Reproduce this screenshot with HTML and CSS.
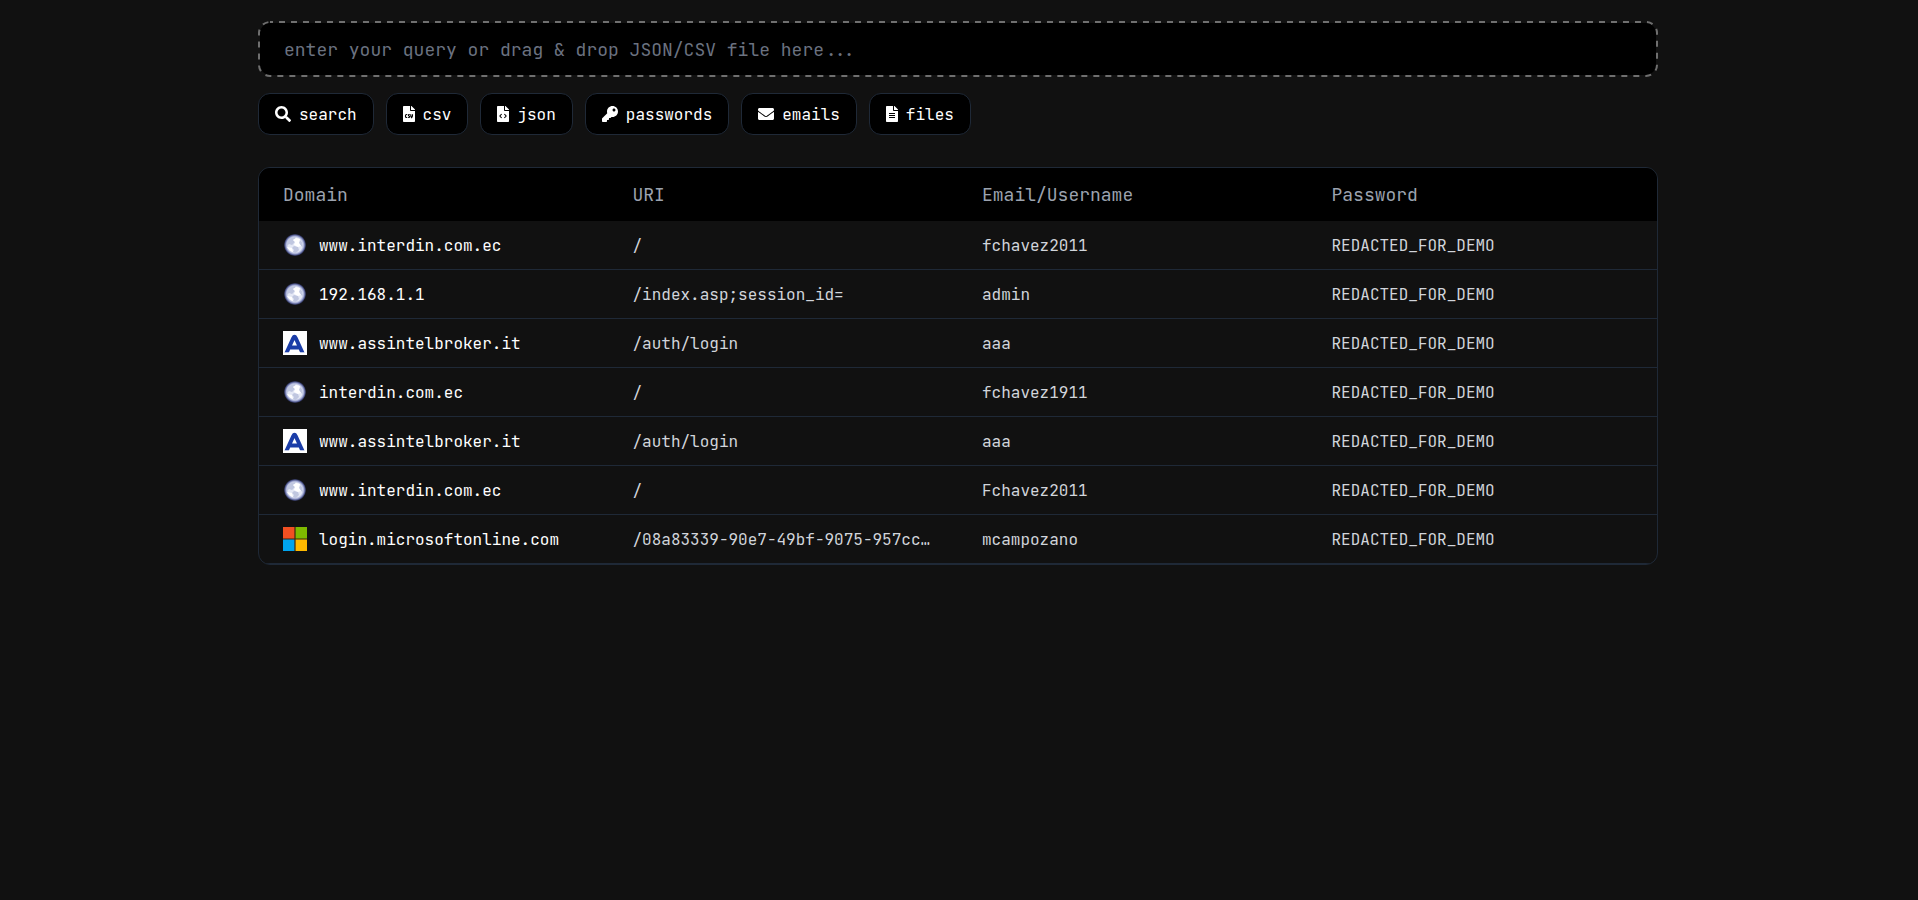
FILE: index.html
```html
<!DOCTYPE html>
<html lang="en">
<head>
<meta charset="utf-8">
<title>Search</title>
<link rel="stylesheet" href="styles.css">
</head>
<body>
<svg class="sprite" aria-hidden="true">
  <defs>
    <radialGradient id="rim">
      <stop offset="0.66" stop-color="#e4e8f5"/>
      <stop offset="0.8" stop-color="#a3abd4"/>
      <stop offset="0.92" stop-color="#4c5488"/>
      <stop offset="1" stop-color="#1d2036"/>
    </radialGradient>
    <symbol id="globe" viewBox="0 0 24 24">
      <circle cx="12" cy="12" r="11" fill="url(#rim)"/>
      <path d="M6 6Q9 4 12 4L13 5L10 7L12 9L9 12L6 11L4 13Q3 9 6 6Z" fill="#c0c7e0"/>
      <path d="M11 13L15 14L16 17L13 20Q11 20 10 19L11 17L9 15Z" fill="#c0c7e0"/>
      <path d="M17 7L19 9L20 14L18 13L16 10Z" fill="#c0c7e0"/>
      <path d="M13 5L17 6L16 10L18 13L15 14L11 12L12 9L10 7Z" fill="#fff"/>
      <path d="M4 14L9 15L10 19Q6 18 4 14Z" fill="#fff"/>
    </symbol>
    <symbol id="letter" viewBox="0 0 24 24">
      <path d="M0 0H24V24H0Z" fill="#fff"/>
      <path d="M3 23L10.300 7Q11.500 4.500 12.700 7L20 23M6 16.500H17" fill="none" stroke="#1b3da8" stroke-width="4" stroke-linejoin="round"/>
      <path d="M0 21.300H24V24H0Z" fill="#fff"/>
    </symbol>
    <symbol id="tiles" viewBox="0 0 24 24">
      <path d="M0 0H24V24H0Z" fill="#3b2510"/>
      <path d="M0 0H11.400V11.400H0Z" fill="#f25022"/>
      <path d="M12.600 0H24V11.400H12.600Z" fill="#7fba00"/>
      <path d="M0 12.600H11.400V24H0Z" fill="#00a4ef"/>
      <path d="M12.600 12.600H24V24H12.600Z" fill="#ffb900"/>
    </symbol>
    <symbol id="sheet" viewBox="0 0 384 512">
      <path d="M224 136V0H24C10.700 0 0 10.700 0 24v464c0 13.300 10.700 24 24 24h336c13.300 0 24-10.700 24-24V160H248c-13.200 0-24-10.800-24-24zm160-14.100v6.100H256V0h6.100c6.400 0 12.500 2.500 17 7l97.900 98c4.500 4.500 7 10.600 7 16.900z" fill="#fff"/>
    </symbol>
  </defs>
</svg>

<main class="page">
  <form class="controls">
    <div class="dropzone">
      <input class="query" type="text" aria-label="Query" placeholder="enter your query or drag &amp; drop JSON/CSV file here...">
      <svg class="dashes" aria-hidden="true"><rect class="dash-line" x="1" y="1" rx="11"/></svg>
    </div>
    <div class="actions">
      <button class="btn" type="button">
        <svg class="icon" viewBox="0 0 512 512" aria-hidden="true"><path d="M505 442.700L405.300 343c-4.500-4.500-10.600-7-17-7H372c27.600-35.300 44-79.700 44-128C416 93.100 322.900 0 208 0S0 93.100 0 208s93.100 208 208 208c48.300 0 92.700-16.400 128-44v16.300c0 6.400 2.500 12.500 7 17l99.700 99.700c9.400 9.400 24.600 9.400 33.900 0l28.300-28.300c9.400-9.400 9.400-24.600.1-34zM208 336c-70.700 0-128-57.200-128-128 0-70.700 57.200-128 128-128 70.700 0 128 57.200 128 128 0 70.700-57.200 128-128 128z"/></svg>
        search
      </button>
      <button class="btn" type="button">
        <svg class="icon icon-file" viewBox="0 0 384 512" aria-hidden="true"><use href="#sheet"/><path class="cut heavy" d="M136 272H112Q80 272 80 304V336Q80 368 112 368H136M216 272H196Q172 272 172 296Q172 312 192 320Q212 328 212 344Q212 368 188 368H164M248 264V296Q248 336 276 372Q304 336 304 296V264"/></svg>
        csv
      </button>
      <button class="btn" type="button">
        <svg class="icon icon-file" viewBox="0 0 384 512" aria-hidden="true"><use href="#sheet"/><path class="cut heavy" d="M148 256L92 320L148 384M236 256L292 320L236 384"/></svg>
        json
      </button>
      <button class="btn" type="button">
        <svg class="icon" viewBox="0 0 512 512" aria-hidden="true"><path d="M512 176C512 273.200 433.200 352 336 352c-11.200 0-22.200-1.100-32.800-3.100l-24 27A24 24 0 0 1 261.200 384H224v40c0 13.300-10.700 24-24 24h-40v40c0 13.300-10.700 24-24 24H24c-13.300 0-24-10.700-24-24v-78.100c0-6.400 2.500-12.500 7-17l161.800-161.800C163.100 213.800 160 195.300 160 176 160 78.800 238.800 0 336 0 433.500 0 512 78.500 512 176zM336 128c0 26.500 21.500 48 48 48s48-21.500 48-48-21.500-48-48-48-48 21.500-48 48z"/></svg>
        passwords
      </button>
      <button class="btn" type="button">
        <svg class="icon" viewBox="0 0 512 512" aria-hidden="true"><path d="M502.300 190.800c3.900-3.100 9.700-.2 9.700 4.700V400c0 26.500-21.500 48-48 48H48c-26.500 0-48-21.500-48-48V195.600c0-5 5.700-7.800 9.700-4.700 22.400 17.400 52.100 39.500 154.100 113.600 21.100 15.400 56.700 47.800 92.200 47.600 35.700.3 72-32.800 92.300-47.600 102-74.100 131.600-96.300 154-113.700zM256 320c23.200.4 56.600-29.200 73.400-41.400 132.700-96.300 142.800-104.700 173.400-128.700 5.800-4.500 9.200-11.500 9.200-18.900v-19c0-26.500-21.500-48-48-48H48c-26.500 0-48 21.500-48 48v19c0 7.400 3.400 14.300 9.200 18.900 30.600 23.900 40.700 32.400 173.400 128.700 16.800 12.200 50.200 41.800 73.400 41.400z"/></svg>
        emails
      </button>
      <button class="btn" type="button">
        <svg class="icon icon-file" viewBox="0 0 384 512" aria-hidden="true"><use href="#sheet"/><path class="cut" d="M96 240H288M96 304H288M96 368H288"/></svg>
        files
      </button>
    </div>
  </form>

  <div class="panel">
    <table class="results">
      <thead>
        <tr><th scope="col">Domain</th><th scope="col">URI</th><th scope="col">Email/Username</th><th scope="col">Password</th></tr>
      </thead>
      <tbody>
        <tr><td><div class="domain"><svg class="favicon" aria-hidden="true"><use href="#globe"/></svg>www.interdin.com.ec</div></td><td>/</td><td>fchavez2011</td><td>REDACTED_FOR_DEMO</td></tr>
        <tr><td><div class="domain"><svg class="favicon" aria-hidden="true"><use href="#globe"/></svg>192.168.1.1</div></td><td>/index.asp;session_id=</td><td>admin</td><td>REDACTED_FOR_DEMO</td></tr>
        <tr><td><div class="domain"><svg class="favicon" aria-hidden="true"><use href="#letter"/></svg>www.assintelbroker.it</div></td><td>/auth/login</td><td>aaa</td><td>REDACTED_FOR_DEMO</td></tr>
        <tr><td><div class="domain"><svg class="favicon" aria-hidden="true"><use href="#globe"/></svg>interdin.com.ec</div></td><td>/</td><td>fchavez1911</td><td>REDACTED_FOR_DEMO</td></tr>
        <tr><td><div class="domain"><svg class="favicon" aria-hidden="true"><use href="#letter"/></svg>www.assintelbroker.it</div></td><td>/auth/login</td><td>aaa</td><td>REDACTED_FOR_DEMO</td></tr>
        <tr><td><div class="domain"><svg class="favicon" aria-hidden="true"><use href="#globe"/></svg>www.interdin.com.ec</div></td><td>/</td><td>Fchavez2011</td><td>REDACTED_FOR_DEMO</td></tr>
        <tr><td><div class="domain"><svg class="favicon" aria-hidden="true"><use href="#tiles"/></svg>login.microsoftonline.com</div></td><td>/08a83339-90e7-49bf-9075-957cc…</td><td>mcampozano</td><td>REDACTED_FOR_DEMO</td></tr>
      </tbody>
    </table>
  </div>
</main>
</body>
</html>
```
FILE: styles.css
```css
* {
  box-sizing: border-box;
}

body {
  margin: 0;
  padding-right: 2px;
  min-height: 100vh;
  background: #111;
  color: #fff;
  font: 16px/26px "JetBrains Mono", "DejaVu Sans Mono", monospace;
}

.sprite {
  position: absolute;
  width: 0;
  height: 0;
}

.page {
  display: flex;
  flex-direction: column;
  gap: 32px;
  max-width: 1400px;
  margin: 0 auto;
  padding: 21px 0;
}

.controls {
  display: flex;
  flex-direction: column;
  gap: 16px;
}

.dropzone {
  position: relative;
  display: flex;
}

/* Dashed outline laid over the edge of the query field */
.dashes {
  position: absolute;
  inset: 0;
  width: 100%;
  height: 100%;
  pointer-events: none;
}

.dash-line {
  width: calc(100% - 2px);
  height: calc(100% - 2px);
  fill: none;
  stroke: #6f6f6f;
  stroke-width: 2;
  stroke-dasharray: 6 6;
  stroke-dashoffset: 3;
}

.query {
  width: 100%;
  height: 56px;
  padding: 12px 24px;
  border: 2px solid transparent;
  border-radius: 12px;
  background: #000 padding-box;
  color: #fff;
  font: inherit;
  font-size: 18px;
  line-height: 28px;
  outline: none;
}

.query::placeholder {
  color: #6b7280;
  opacity: 1;
}

.actions {
  display: flex;
  flex-wrap: wrap;
  gap: 12px;
}

.btn {
  display: flex;
  align-items: flex-start;
  gap: 8px;
  padding: 8px 16px 6px;
  border: 1px solid #1f2937;
  border-radius: 12px;
  background: #000;
  color: #fff;
  font: inherit;
}

.icon {
  width: 16px;
  height: 16px;
  margin-top: 4px;
  fill: currentColor;
}

.icon-file {
  width: 12px;
}

.cut {
  fill: none;
  stroke: #000;
  stroke-width: 32;
}

.heavy {
  stroke-width: 36;
}

.panel {
  border: 1px solid #1f2937;
  border-radius: 12px;
  overflow: hidden;
}

.results {
  width: 100%;
  table-layout: fixed;
  border-collapse: separate;
  border-spacing: 0;
}

.results th,
.results td {
  text-align: left;
  white-space: nowrap;
  overflow: hidden;
  text-overflow: ellipsis;
}

.results th {
  padding: 13px 24px 12px;
  background: #000;
  color: #9ca3af;
  font-size: 18px;
  font-weight: 400;
  line-height: 28px;
}

.results td {
  padding: 12px 24px 10px;
  border-bottom: 1px solid #1f2937;
  color: #d1d5db;
}

.domain {
  display: flex;
  align-items: flex-start;
  gap: 12px;
  color: #fff;
}

.favicon {
  flex: none;
  width: 24px;
  height: 24px;
}
```
